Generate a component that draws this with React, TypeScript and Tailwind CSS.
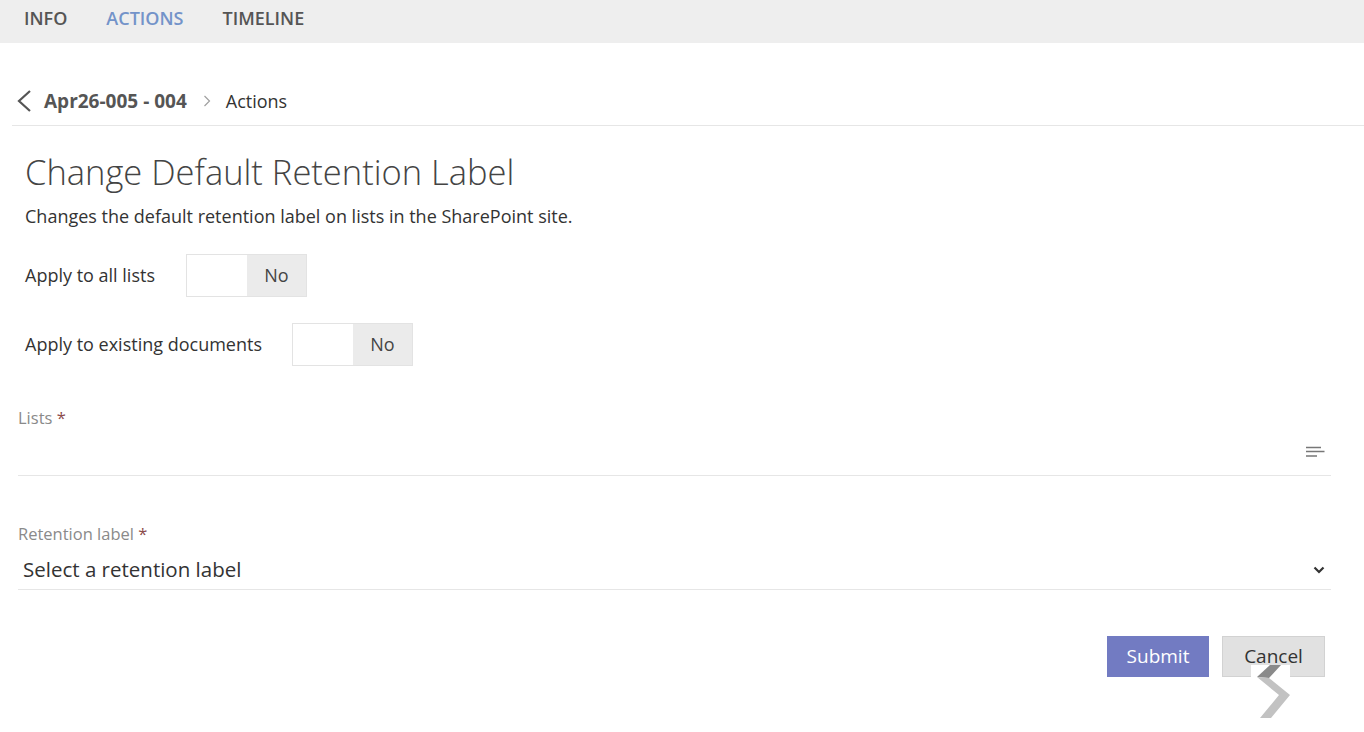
import { useState } from "react";

function Toggle({ value }: { value: boolean }) {
  return (
    <div className="flex h-[43px] w-[121px] border border-[#e3e3e3]">
      <div className="w-[60px] bg-white" />
      <div className="flex flex-1 items-center justify-center bg-[#ebebeb] text-[18px] text-[#444]">
        {value ? "Yes" : "No"}
      </div>
    </div>
  );
}

function FieldLabel({ children }: { children: string }) {
  return (
    <div className="h-[20px] text-[16.5px] leading-[20px] text-[#8a8a8a]">
      {children} <span className="text-[#8b4b4b]">*</span>
    </div>
  );
}

// floating pager handle that sits over the bottom-right corner
function PagerHandle() {
  return (
    <svg
      className="pointer-events-none absolute left-[1251px] top-[665px]"
      width="40"
      height="55"
      viewBox="1251 665 40 55"
    >
      <rect x="1251" y="665" width="39" height="55" fill="#fff" />
      <polygon points="1270,665 1281,665 1269,678 1257,677" fill="#8a8a8a" />
      <polygon points="1257,677 1269,678 1290,695 1271,718 1260,718 1279,695" fill="#c2c2c2" />
    </svg>
  );
}

export default function App() {
  const [tab] = useState("ACTIONS");
  const tabs = ["INFO", "ACTIONS", "TIMELINE"];

  return (
    <div className="relative min-h-screen bg-white font-['Open_Sans',sans-serif] text-[#333]">
      <nav className="flex h-[43px] items-center gap-[39px] bg-[#eeeeee] pb-[7px] pl-[24px]">
        {tabs.map((t) => (
          <span
            key={t}
            className={
              "text-[18px] font-semibold leading-none " +
              (t === tab ? "text-[#7393c9]" : "text-[#555]")
            }
          >
            {t}
          </span>
        ))}
      </nav>

      <div className="ml-[12px] border-b border-[#e6e6e6] pb-[10px] pt-[44px]">
        <div className="flex h-[28px] items-center">
          <svg width="16" height="22" viewBox="0 0 16 22" className="ml-[4px]">
            <path d="M14 1 L3 11 L14 21" fill="none" stroke="#555" strokeWidth="2.2" />
          </svg>
          <span className="ml-[12px] text-[19px] font-bold text-[#555]">Apr26-005 - 004</span>
          <svg width="10" height="12" viewBox="0 0 10 12" className="ml-[15px]">
            <path d="M2.5 1 L7.5 6 L2.5 11" fill="none" stroke="#a0a0a0" strokeWidth="1.2" />
          </svg>
          <span className="ml-[14px] text-[18px] text-[#333]">Actions</span>
        </div>
      </div>

      <div className="pl-[25px]">
        <h1 className="mt-[26px] text-[34.5px] font-light leading-[40px] text-[#444]">
          Change Default Retention Label
        </h1>
        <p className="mt-[12px] text-[18px] leading-[24px] text-[#333]">
          Changes the default retention label on lists in the SharePoint site.
        </p>

        <div className="mt-[26px] flex items-center gap-[31px]">
          <span className="text-[18px] text-[#333]">Apply to all lists</span>
          <Toggle value={false} />
        </div>
        <div className="mt-[26px] flex items-center gap-[30px]">
          <span className="text-[18px] text-[#333]">Apply to existing documents</span>
          <Toggle value={false} />
        </div>
      </div>

      <div className="ml-[18px] mr-[33px]">
        <div className="mt-[42px]">
          <FieldLabel>Lists</FieldLabel>
          <div className="flex h-[48px] items-center justify-end border-b border-[#e6e6e6] pr-[6px]">
            <svg width="19" height="12" viewBox="0 0 19 12">
              <path d="M0 1.5 H15 M0 5.5 H18.5 M0 10 H11" stroke="#777" strokeWidth="1.3" />
            </svg>
          </div>
        </div>

        <div className="mt-[48px]">
          <FieldLabel>Retention label</FieldLabel>
          <div className="mt-[4px] flex h-[42px] items-center justify-between border-b border-[#e6e6e6] pl-[5px] pr-[6px] pt-[2px]">
            <span className="text-[20.5px] text-[#333]">Select a retention label</span>
            <svg width="12" height="8" viewBox="0 0 12 8">
              <path d="M1.5 1.5 L6 6 L10.5 1.5" fill="none" stroke="#333" strokeWidth="2.2" />
            </svg>
          </div>
        </div>
      </div>

      <div className="mr-[39px] mt-[46px] flex justify-end gap-[13px]">
        <button className="h-[41px] w-[102px] bg-[#727bc2] text-[19px] text-white">Submit</button>
        <button className="h-[41px] w-[103px] border border-[#d2d2d2] bg-[#e1e1e1] text-[19px] text-[#333]">
          Cancel
        </button>
      </div>

      <PagerHandle />
    </div>
  );
}
